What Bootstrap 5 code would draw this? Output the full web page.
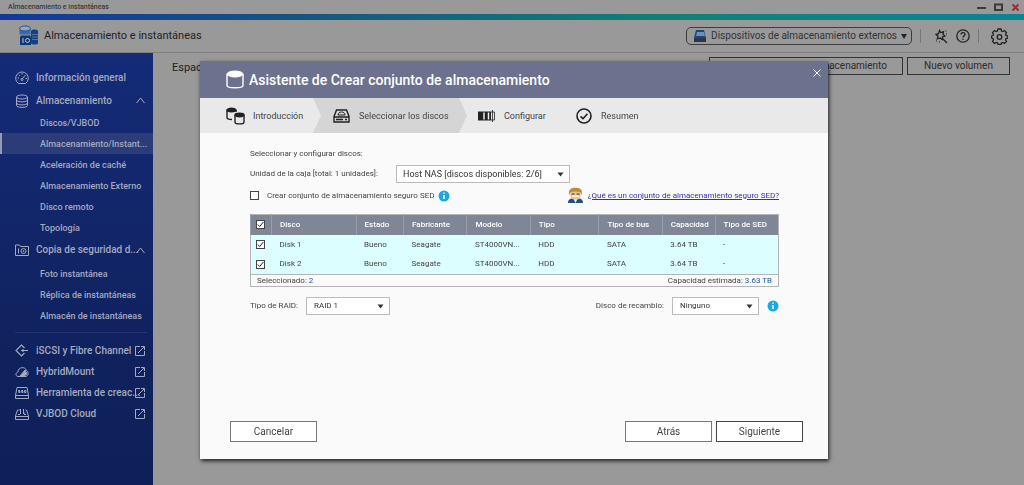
<!DOCTYPE html>
<html lang="es">
<head>
<meta charset="utf-8">
<meta name="viewport" content="width=device-width, initial-scale=1">
<title>Almacenamiento e instantáneas</title>
<link href="https://cdn.jsdelivr.net/npm/bootstrap@5.3.0/dist/css/bootstrap.min.css" rel="stylesheet">
<style>
  body { font-family: Roboto, "Liberation Sans", sans-serif; font-size: 11px; line-height: 14px; background: #999; color: #222; }
  svg { flex: none; fill: none; }
  svg:not([stroke]) { stroke: currentColor; }
  a { color: inherit; text-decoration: none; }
  .app-shell { min-height: 100vh; }
  .window-bar { height: 14px; font-size: 7px; font-weight: 500; padding: 0 4px 0 8px; color: #3a3a3a; }
  .window-bar button, .icon-btn { background: none; border: 0; padding: 0; color: inherit; display: flex; }
  .accent-bar { height: 6px; background: linear-gradient(90deg, #14379a, #17557f 30%, #137f77 65%, #0b8593 100%); }
  .app-header { height: 33px; border-bottom: 1px solid #808080; padding: 0 16px 0 18px; }
  .app-title { font-size: 11px; line-height: 14px; font-weight: 400; margin: 0; color: #222; }
  .device-btn { border: 1px solid #3d3d3d; border-radius: 5px; background: none; color: #333; height: 18px; padding: 0 4px 0 6px; font-size: 10px; line-height: 14px; }
  .split-line { width: 1px; height: 14px; background: #777; }
  .side-nav { width: 153px; flex: none; padding-top: 13px; color: #a3a9bf; background: linear-gradient(#142b78, #10225f 65%, #0f2058); }
  .side-nav a { display: flex; align-items: center; height: 21px; white-space: nowrap; }
  .side-nav .nav-main { padding: 0 8px 0 15px; font-size: 10px; font-weight: 500; }
  .side-nav .nav-main svg:first-child { margin-right: 7px; }
  .side-nav .nav-main span { flex: 1 1 0; min-width: 0; }
  .side-nav .nav-tall { height: 24px; }
  .side-nav .nav-group { margin-top: 1px; }
  .side-nav .nav-sub { padding: 0 4px 0 40px; font-size: 9px; font-weight: 500; }
  .side-nav .nav-current { background: #2b3c78; border-left: 2px solid #959bb3; padding-left: 38px; }
  .side-nav hr { margin: 6px 6px 7px 15px; border-color: #5a6690; }
  .page-head { padding: 4px 14px 0 19px; }
  .page-btn { border: 1px solid #333; background: none; color: #2b2b2b; font-size: 10px; height: 18px; line-height: 14px; padding: 0; width: 103px; }
  .page-btn.wide { width: 194px; text-align: right; padding-right: 15px; }
  .dialog-layer { inset: 0; padding: 61px 0 0 4px; }
  .dialog-box { width: 628px; max-width: 100%; min-height: 398px; background: #fafafa; color: #444; box-shadow: 1px 2px 4px rgba(0,0,0,.8); align-self: flex-start; }
  .dialog-head { height: 37px; background: #6c728d; color: #fff; padding: 0 7px 0 26px; gap: 5px; }
  .dialog-head h2 { font-size: 14px; font-weight: 500; margin: 0; line-height: 18px; }
  .step-bar { height: 35px; background: #e9e9e9; color: #444; font-size: 9px; list-style: none; padding: 0; margin: 0; }
  .step-bar li { display: flex; align-items: center; }
  .step-bar svg { color: #222; }
  .step-one { width: 113px; padding-left: 26px; gap: 7px; }
  .step-two { width: 154px; padding-left: 20px; gap: 9px; background: #d5d5d5; clip-path: polygon(0 0, 146px 0, 100% 50%, 146px 100%, 0 100%, 8px 50%); }
  .step-three { width: 109px; padding-left: 11px; gap: 8px; }
  .step-four { gap: 9px; }
  .dialog-body { padding: 14px 49px 0 50px; font-size: 8px; }
  .form-select.pick { border: 1px solid #bbb; border-radius: 0; background-color: #fff; color: #333; font-size: 8px; line-height: 14px; height: 18px; min-height: 0; padding: 0 16px 0 7px; background-size: 7px 5px; background-position: right 5px center;
    background-image: url("data:image/svg+xml,%3Csvg xmlns='http://www.w3.org/2000/svg' viewBox='0 0 7 5'%3E%3Cpath d='M.5.5h6l-3 4z' fill='%23333'/%3E%3C/svg%3E"); }
  .form-select.pick-unit { width: 174px; font-size: 9px; padding-left: 6px; }
  .form-select.pick-raid { width: 84px; }
  .form-select.pick-spare { width: 87px; }
  .unit-label { width: 146px; }
  .tick { width: 9px; height: 9px; border: 1px solid #444; background: #fff no-repeat center/7px 7px; appearance: none; border-radius: 0; margin: 0; display: block; flex: none; }
  .tick:checked { background-image: url("data:image/svg+xml,%3Csvg xmlns='http://www.w3.org/2000/svg' viewBox='0 0 7 7'%3E%3Cpath d='M.8 3.500l1.900 2L6.300 1' stroke='%23222' fill='none'/%3E%3C/svg%3E"); }
  .help-link { color: #3533ac; text-decoration: underline; font-size: 8px; }
  .disk-table { width: 100%; margin-top: 10px; table-layout: fixed; border-collapse: collapse; font-size: 8px; line-height: 12px; border: 1px solid #b5b5b5; }
  .disk-table th, .disk-table td { height: 20px; padding: 0 0 0 8px; white-space: nowrap; overflow: hidden; text-overflow: ellipsis; }
  .disk-table .tick { margin-left: -3px; }
  .disk-table thead { background: #7f8696; color: #fff; }
  .disk-table th { font-weight: 500; border-left: 1px solid #989eab; }
  .disk-table tbody { background: #dcfeff; }
  .disk-table tfoot td { height: 12px; border-top: 1px solid #b5b5b5; padding: 0 6px; line-height: 10px; }
  .disk-table b { color: #215a9c; font-weight: 400; }
  .raid-row { margin-top: 10px; }
  .dialog-foot { padding: 0 25px 17px 30px; }
  .foot-btn { width: 87px; height: 21px; border: 1px solid #777; background: #fff; color: #444; font-size: 10px; line-height: 14px; padding: 0; }
  .foot-btn.main { border-color: #444; }
</style>
</head>
<body>
<div class="app-shell d-flex flex-column">
  <div class="window-bar d-flex align-items-center justify-content-between">
    <span>Almacenamiento e instantáneas</span>
    <div class="d-flex align-items-center gap-2">
      <button aria-label="Minimizar"><svg width="9" height="9" stroke-width="2"><path d="M0 5h9"/></svg></button>
      <button aria-label="Maximizar"><svg width="9" height="9" stroke-width="2"><path d="M1 1.500h7v5.500H1z"/></svg></button>
      <button aria-label="Cerrar"><svg width="9" height="9" stroke="#b0252b" stroke-width="2"><path d="M1.500 1.500l6 6M7.500 1.500l-6 6"/></svg></button>
    </div>
  </div>
  <div class="accent-bar"></div>
  <header class="app-header d-flex align-items-center justify-content-between">
    <div class="d-flex align-items-center gap-1">
      <svg width="22" height="22" viewBox="0 0 22 22">
        <path d="M13 6c0-2 7-2 7 0v12c0 2-7 2-7 0z" fill="#174083" stroke="none"/>
        <path d="M14 9.500h6M14 12h6M14 14.500h6" stroke="#7189ae" stroke-width=".7"/>
        <path d="M1.500 3.500v6h11v-6" fill="#356bb0" stroke="none"/>
        <ellipse cx="7" cy="3.500" rx="5.500" ry="2.500" fill="#9aa6b8" stroke="#24549a"/>
        <path d="M2 12l1-1.500h9l1 1.500v8H2z" fill="#0f3975" stroke="none"/>
        <path d="M5 13v5" stroke="#b9c3d4"/><circle cx="9.500" cy="15.500" r="2" stroke="#b9c3d4"/>
      </svg>
      <h1 class="app-title">Almacenamiento e instantáneas</h1>
    </div>
    <div class="d-flex align-items-center">
      <button class="device-btn d-flex align-items-center gap-1">
        <svg width="14" height="14" viewBox="0 0 14 14" stroke="none"><path d="M3 1h8l2 8H1z" fill="#1c467e"/><path d="M4 3h7l1 4H3z" fill="#6d8fb8"/><path d="M1 9h12v4H1z" fill="#2b3648"/></svg>
        <span>Dispositivos de almacenamiento externos</span>
        <svg width="6" height="5" stroke="none"><path fill="#222" d="M0 0h6L3 5z"/></svg>
      </button>
      <span class="split-line ms-2"></span>
      <button class="icon-btn ms-2 ps-1" aria-label="Herramientas"><svg width="15" height="15" viewBox="0 0 15 15" stroke-width="1.300"><path d="M6.500 1.500l1.200 2 2.800-.8-.5 2.800 2 1.500-2.500 1-.3 2.500-2.200-1.500-2.700 1 .7-2.700-2-2 2.500-.6zM9.500 9.500l4.500 4.500"/><path d="M12.500 2h1M13 5h1M3 12h1M6 13h1" stroke-width="1"/></svg></button>
      <button class="icon-btn ms-2" aria-label="Ayuda"><svg width="14" height="14" viewBox="0 0 14 14" stroke-width="1.300"><circle cx="7" cy="7" r="6.200"/><path d="M5 5.500c0-2.600 4-2.600 4 0C9 7 7 6.800 7 8.500M7 9.800v1.300"/></svg></button>
      <span class="split-line ms-2 me-2"></span>
      <button class="icon-btn ms-1" aria-label="Configuración"><svg width="17" height="17" viewBox="0 0 17 17" stroke-width="1.300"><path d="M7 1h3l.5 2 1.300.5 1.700-1 2 2-1 1.800.5 1.200 2 .5v2l-2 .5-.5 1.300 1 1.700-2 2-1.700-1-1.300.5L10 16.500H7L6.500 15l-1.300-.5-1.700 1-2-2 1-1.700L2 10.500 .6 10V8l1.400-.5.500-1.300-1-1.700 2-2 1.700 1L6.500 3z"/><circle cx="8.500" cy="9" r="2.300"/></svg></button>
    </div>
  </header>
  <div class="d-flex flex-grow-1">
    <nav class="side-nav">
      <a href="#" class="nav-main nav-tall"><svg width="14" height="14" viewBox="0 0 14 14"><path d="M3.500 12.500a6.300 6.300 0 1 1 7 0M7 8l3.500-4M2.500 7h1.500M10.500 7.500H12M7 2v1.500M3.800 3.800l1 1M3.500 12.500h7"/><circle cx="7" cy="8.500" r="1"/></svg><span>Información general</span></a>
      <a href="#" class="nav-main"><svg width="14" height="14" viewBox="0 0 14 14"><ellipse cx="7" cy="3" rx="5.500" ry="2"/><path d="M1.500 3v8.500c0 2.500 11 2.500 11 0V3M1.500 6c0 2.500 11 2.500 11 0M1.500 9c0 2.500 11 2.500 11 0"/></svg><span>Almacenamiento</span><svg width="9" height="7"><path d="M.5 6l4-5 4 5"/></svg></a>
      <div class="nav-group">
        <a href="#" class="nav-sub">Discos/VJBOD</a>
        <a href="#" class="nav-sub nav-current">Almacenamiento/Instant...</a>
        <a href="#" class="nav-sub">Aceleración de caché</a>
        <a href="#" class="nav-sub">Almacenamiento Externo</a>
        <a href="#" class="nav-sub">Disco remoto</a>
        <a href="#" class="nav-sub">Topología</a>
      </div>
      <a href="#" class="nav-main nav-tall"><svg width="14" height="12" viewBox="0 0 14 12"><path d="M.5 11.500V1h4l1 1.500h8v9zM3.500 4.500v5"/><circle cx="8.500" cy="7" r="2.500"/><circle cx="8.500" cy="7" r=".5"/></svg><span>Copia de seguridad d...</span><svg width="9" height="7"><path d="M.5 6l4-5 4 5"/></svg></a>
      <div class="nav-group">
        <a href="#" class="nav-sub">Foto instantánea</a>
        <a href="#" class="nav-sub">Réplica de instantáneas</a>
        <a href="#" class="nav-sub">Almacén de instantáneas</a>
      </div>
      <hr>
      <a href="#" class="nav-main"><svg width="14" height="13" viewBox="0 0 14 13" stroke-width="1.200"><path d="M9.500 4L6.500 1 1 6.500 6.500 12l3-3M6 6.500h7M8 5v3"/></svg><span>iSCSI y Fibre Channel</span><svg width="10" height="10"><path d="M5 .5H.5v9h9V5M6 .5h3.500V4M3 7L9 1"/></svg></a>
      <a href="#" class="nav-main"><svg width="14" height="12" viewBox="0 0 14 12"><path d="M3 10.500C0 10 .5 6.500 3 6c0-5 7-6 8.500-1.500 2.500 1.500 2 5-.5 6z"/><path d="M5 10l5-6 2 4-3 2z" fill="currentColor"/></svg><span>HybridMount</span><svg width="10" height="10"><path d="M5 .5H.5v9h9V5M6 .5h3.500V4M3 7L9 1"/></svg></a>
      <a href="#" class="nav-main"><svg width="14" height="12" viewBox="0 0 14 12"><path d="M.5 8.500L2 .5h10l1.500 8v3H.5zM.5 8.500h13"/><path d="M5 3.500H3.500v1H5v1H3.500M8 3.500H6.500v1H8v1H6.500M9.500 3.500v2H11v-2z"/></svg><span>Herramienta de creac...</span><svg width="10" height="10"><path d="M5 .5H.5v9h9V5M6 .5h3.500V4M3 7L9 1"/></svg></a>
      <a href="#" class="nav-main"><svg width="14" height="12" viewBox="0 0 14 12"><path d="M3.500 2H2.500L.5 8v3.500h13V8L11.500 2h-1M.5 8.500h13M5.500 1v5M4 2.500L5.500 1M8.500 1v5M10 4.500L8.500 6M3 6.500h2M9 6.500h2"/></svg><span>VJBOD Cloud</span><svg width="10" height="10"><path d="M5 .5H.5v9h9V5M6 .5h3.500V4M3 7L9 1"/></svg></a>
    </nav>
    <main class="flex-grow-1">
      <div class="page-head d-flex justify-content-between">
        <div class="pt-1 app-title">Espacio</div>
        <div class="d-flex gap-1">
          <button class="page-btn wide">Nuevo conjunto de almacenamiento</button>
          <button class="page-btn">Nuevo volumen</button>
        </div>
      </div>
    </main>
  </div>
</div>

<div class="dialog-layer position-fixed d-flex justify-content-center">
  <section class="dialog-box d-flex flex-column" role="dialog" aria-labelledby="dlg-title">
    <header class="dialog-head d-flex align-items-center">
      <svg width="18" height="19" viewBox="0 0 18 19"><path d="M1 4v11.500c0 3 16 3 16 0V4" stroke-width="1.400"/><ellipse cx="9" cy="4" rx="8" ry="3" fill="#fff"/></svg>
      <h2 id="dlg-title" class="flex-grow-1">Asistente de Crear conjunto de almacenamiento</h2>
      <button class="icon-btn align-self-start mt-2" aria-label="Cerrar"><svg width="8" height="8"><path d="M.5.5l7 7M7.500.5l-7 7"/></svg></button>
    </header>
    <ol class="step-bar d-flex">
      <li class="step-one"><svg width="20" height="18" viewBox="0 0 20 18" stroke-width="1.400"><path d="M1 3v7.500c0 1.500 3 2 5 2M10 3v2"/><ellipse cx="5.500" cy="3" rx="4.500" ry="1.700" fill="#222"/><path d="M9 8v7c0 2.500 9 2.500 9 0V8"/><ellipse cx="13.500" cy="8" rx="4.500" ry="1.700" fill="#222"/></svg>Introducción</li>
      <li class="step-two" aria-current="step"><svg width="17" height="14" viewBox="0 0 17 14" stroke-width="1.400"><path d="M1 7.500L3.500 1h10L16 7.500V13H1zM1 8h15M3 10.500h7M12 10.500h2"/><path d="M5 6c0-4 7-4 7 0z" stroke-width="1"/></svg>Seleccionar los discos</li>
      <li class="step-three"><svg width="18" height="12" viewBox="0 0 18 12"><path d="M0 1.500h13v9H0z" fill="#222" stroke="none"/><path d="M6 2.500v7M10.500 2.500v7" stroke="#eee" stroke-width="1.500"/><path d="M13 2h3.500v8H13M14.500 0v12" stroke-width=".8"/></svg>Configurar</li>
      <li class="step-four"><svg width="16" height="16" viewBox="0 0 16 16" stroke-width="1.600"><circle cx="8" cy="8" r="7"/><path d="M4.500 8.300l2.500 2.400 4.500-5"/></svg>Resumen</li>
    </ol>
    <div class="dialog-body flex-grow-1">
      <div>Seleccionar y configurar discos:</div>
      <div class="d-flex align-items-center mt-1">
        <label for="unit" class="unit-label">Unidad de la caja [total: 1 unidades]:</label>
        <select id="unit" class="form-select pick pick-unit"><option>Host NAS [discos disponibles: 2/6]</option></select>
      </div>
      <div class="d-flex align-items-center justify-content-between mt-1">
        <div class="d-flex align-items-center">
          <input id="sed" type="checkbox" class="tick"><label for="sed" class="ms-1 ps-1">Crear conjunto de almacenamiento seguro SED</label>
          <svg class="ms-1" width="12" height="12" viewBox="0 0 12 12"><circle cx="6" cy="6" r="5.500" fill="#1ba7e5" stroke="none"/><path d="M6 5v4M6 2.500v1.300" stroke="#fff" stroke-width="1.500"/></svg>
        </div>
        <div class="d-flex align-items-center gap-1">
          <svg width="17" height="17" viewBox="0 0 17 17" stroke="none"><path d="M1 16c0-4 3-5 7.500-5s7.500 1 7.500 5z" fill="#234f7d"/><path d="M6 11l2.500 5 2.500-5z" fill="#eee"/><rect x="3.500" y="3" width="10" height="9.500" rx="4" fill="#f1bd8a"/><path d="M2 8C1 2 5 .5 9 .8c5 0 7 3 5.500 7.200L13 5 8 4.500 4 5z" fill="#c58a35"/><path d="M4.500 7h3M9.500 7h3" stroke="#333"/><path d="M5 10c1.500-1.500 2-1 3.500-.5 1.500-.5 2-1 3.500.5" stroke="#fff" stroke-width="1.500"/></svg>
          <a href="#" class="help-link">¿Qué es un conjunto de almacenamiento seguro SED?</a>
        </div>
      </div>
      <table class="disk-table">
        <colgroup><col style="width:4%"><col style="width:16%"><col style="width:9%"><col style="width:12%"><col style="width:12%"><col style="width:13%"><col style="width:12%"><col style="width:10%"><col style="width:12%"></colgroup>
        <thead><tr><th><input type="checkbox" class="tick" checked aria-label="Seleccionar todo"></th><th>Disco</th><th>Estado</th><th>Fabricante</th><th>Modelo</th><th>Tipo</th><th>Tipo de bus</th><th>Capacidad</th><th>Tipo de SED</th></tr></thead>
        <tbody>
          <tr><td><input type="checkbox" class="tick" checked aria-label="Disk 1"></td><td>Disk 1</td><td>Bueno</td><td>Seagate</td><td>ST4000VN...</td><td>HDD</td><td>SATA</td><td>3.64 TB</td><td>-</td></tr>
          <tr><td><input type="checkbox" class="tick" checked aria-label="Disk 2"></td><td>Disk 2</td><td>Bueno</td><td>Seagate</td><td>ST4000VN...</td><td>HDD</td><td>SATA</td><td>3.64 TB</td><td>-</td></tr>
        </tbody>
        <tfoot><tr><td colspan="5">Seleccionado: <b>2</b></td><td colspan="4" class="text-end">Capacidad estimada: <b>3.63 TB</b></td></tr></tfoot>
      </table>
      <div class="raid-row d-flex align-items-center justify-content-between">
        <div class="d-flex align-items-center gap-2"><label for="raid">Tipo de RAID:</label><select id="raid" class="form-select pick pick-raid"><option>RAID 1</option></select></div>
        <div class="d-flex align-items-center gap-2"><label for="spare">Disco de recambio:</label><select id="spare" class="form-select pick pick-spare"><option>Ninguno</option></select>
          <svg width="12" height="12" viewBox="0 0 12 12"><circle cx="6" cy="6" r="5.500" fill="#1ba7e5" stroke="none"/><path d="M6 5v4M6 2.500v1.300" stroke="#fff" stroke-width="1.500"/></svg></div>
      </div>
    </div>
    <footer class="dialog-foot d-flex justify-content-between">
      <button class="foot-btn">Cancelar</button>
      <div class="d-flex gap-1"><button class="foot-btn">Atrás</button><button class="foot-btn main">Siguiente</button></div>
    </footer>
  </section>
</div>
<script src="https://cdn.jsdelivr.net/npm/bootstrap@5.3.0/dist/js/bootstrap.bundle.min.js"></script>
</body>
</html>
